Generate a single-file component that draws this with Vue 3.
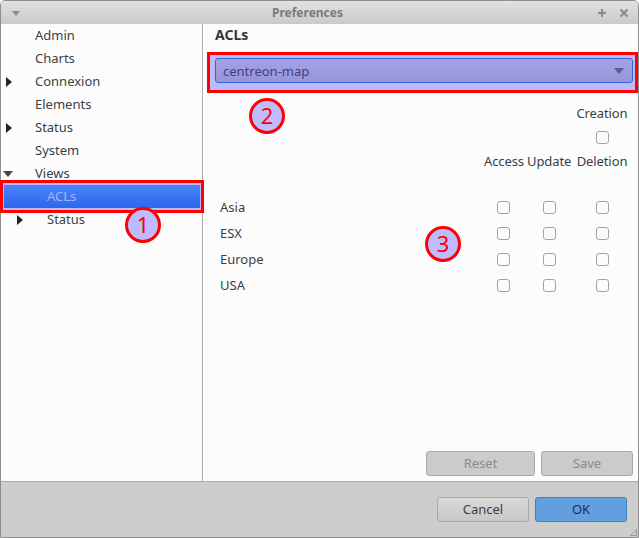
<template>
  <div class="window">
    <header class="titlebar">
      <svg class="menu-arrow" width="10" height="6" viewBox="0 0 10 6"><path d="M1 0h8L5 5z" fill="#8c8c8c" /></svg>
      <span class="title">Preferences</span>
      <span class="win-btn plus">
        <svg width="10" height="10" viewBox="0 0 10 10"><path d="M4 1h2v3h3v2H6v3H4V6H1V4h3z" fill="#8a8a8a" /></svg>
      </span>
      <span class="win-btn close">
        <svg width="10" height="10" viewBox="0 0 10 10"><path d="M1.5 1.5l7 7M8.5 1.5l-7 7" stroke="#8a8a8a" stroke-width="2" /></svg>
      </span>
    </header>

    <div class="main">
      <aside class="tree">
        <div
          v-for="item in tree"
          :key="item.label + item.depth"
          class="tree-row"
          :class="{ selected: item.selected, child: item.depth === 1 }"
        >
          <svg v-if="item.arrow === 'right'" class="arrow" width="6" height="10" viewBox="0 0 6 10"><path d="M0 0l6 5-6 5z" fill="#222" /></svg>
          <svg v-if="item.arrow === 'down'" class="arrow down" width="10" height="6" viewBox="0 0 10 6"><path d="M0 0h10L5 6z" fill="#444" /></svg>
          <span class="tree-label">{{ item.label }}</span>
        </div>
      </aside>

      <section class="panel">
        <h2>ACLs</h2>
        <div class="combo">
          <span>centreon-map</span>
          <svg width="10" height="6" viewBox="0 0 10 6"><path d="M0 0h10L5 6z" fill="#6b6b67" /></svg>
        </div>

        <div class="perms">
          <span class="head c4">Creation</span>
          <span class="c4 cell"><i class="check"></i></span>
          <span class="head c2">Access</span>
          <span class="head c3">Update</span>
          <span class="head c4">Deletion</span>
        </div>

        <div class="perms rows">
          <template v-for="name in groups" :key="name">
            <span class="group">{{ name }}</span>
            <span class="cell"><i class="check"></i></span>
            <span class="cell"><i class="check"></i></span>
            <span class="cell"><i class="check"></i></span>
          </template>
        </div>

        <div class="panel-actions">
          <button class="btn disabled reset">Reset</button>
          <button class="btn disabled save">Save</button>
        </div>
      </section>
    </div>

    <footer class="footer">
      <button class="btn cancel">Cancel</button>
      <button class="btn ok">OK</button>
      <svg class="grip" width="7" height="7" viewBox="0 0 7 7"><path d="M6.5 0.5v6h-6zM6.5 3.5v3h-3" fill="none" stroke="#999" stroke-width="1" /></svg>
    </footer>

    <div class="mark box-tree"></div>
    <div class="mark box-combo"></div>
    <div class="badge" style="left: 124px; top: 206px">1</div>
    <div class="badge" style="left: 248px; top: 97px">2</div>
    <div class="badge" style="left: 424px; top: 225px">3</div>
  </div>
</template>

<script setup>
const tree = [
  { label: 'Admin', depth: 0 },
  { label: 'Charts', depth: 0 },
  { label: 'Connexion', depth: 0, arrow: 'right' },
  { label: 'Elements', depth: 0 },
  { label: 'Status', depth: 0, arrow: 'right' },
  { label: 'System', depth: 0 },
  { label: 'Views', depth: 0, arrow: 'down' },
  { label: 'ACLs', depth: 1, selected: true },
  { label: 'Status', depth: 1, arrow: 'right' }
]

const groups = ['Asia', 'ESX', 'Europe', 'USA']
</script>

<style>
html, body { margin: 0; background: #fff; }
</style>

<style scoped>
.window {
  position: relative;
  width: 639px;
  height: 538px;
  box-sizing: border-box;
  border: 1px solid #8e8e8e;
  border-radius: 5px 5px 0 0;
  display: flex;
  flex-direction: column;
  font-family: "Noto Sans", sans-serif;
  font-size: 13px;
  color: #3a3f45;
  background: #fcfcfc;
}

.titlebar {
  height: 23px;
  flex: none;
  position: relative;
  display: flex;
  align-items: center;
  justify-content: center;
  padding-right: 24px;
  border-radius: 4px 4px 0 0;
  background: linear-gradient(#e2e2e2, #c9c9c9);
}
.title { font-size: 12px; font-weight: 700; color: #7a7a7a; }
.menu-arrow { position: absolute; left: 10px; top: 10px; }
.win-btn { position: absolute; top: 7px; line-height: 0; }
.plus { right: 31px; }
.close { right: 9px; }

.main { flex: 1; display: flex; min-height: 0; }

.tree { width: 201px; flex: none; border-right: 1px solid #b0b0b0; }
.tree-row {
  position: relative;
  height: 23px;
  display: flex;
  align-items: center;
  padding: 0 0 1px 34px;
  box-sizing: border-box;
}
.tree-row.child { padding-left: 46px; }
.tree-row .arrow { position: absolute; left: 5px; top: 7px; }
.tree-row .arrow.down { left: 2px; top: 9px; }
.tree-row.child .arrow { left: 16px; }
.tree-row.selected {
  background: linear-gradient(#53a8f8, #207ee1);
  color: #dcf0f0;
  margin: 0 2px 0 3px;
  padding-left: 43px;
}

.panel { flex: 1; display: flex; flex-direction: column; min-width: 0; }
.panel h2 {
  margin: 0;
  height: 28px;
  line-height: 21px;
  padding-left: 12px;
  font-size: 14px;
  font-weight: 700;
  color: #33373b;
}
.combo {
  margin: 6px 5px 0 12px;
  height: 25px;
  box-sizing: border-box;
  border: 1px solid #2f79c3;
  border-radius: 3px;
  background: linear-gradient(#dbd7d6, #c7c4c3);
  color: #3a3f45;
  display: flex;
  align-items: center;
  justify-content: space-between;
  padding: 0 8px 0 7px;
}

.perms {
  display: grid;
  grid-template-columns: 1fr 38px 44px 52px;
  column-gap: 5px;
  grid-auto-rows: 24px;
  align-items: center;
  margin: 18px 10px 0 17px;
}
.perms.rows { grid-auto-rows: 26px; margin-top: 21px; flex: 1; align-content: start; }
.head { text-align: center; white-space: nowrap; letter-spacing: -0.1px; }
.c2 { grid-column: 2; }
.c3 { grid-column: 3; }
.c4 { grid-column: 4; }
.cell { display: flex; justify-content: center; }
.check {
  width: 13px;
  height: 13px;
  box-sizing: border-box;
  border: 1px solid #a3a3a3;
  border-radius: 3px;
  background: #fcfcfc;
}

.panel-actions {
  display: flex;
  justify-content: flex-end;
  gap: 6px;
  padding: 0 5px 5px 0;
}

.btn {
  height: 25px;
  box-sizing: border-box;
  border: 1px solid #a8a8a8;
  border-radius: 3px;
  font-family: inherit;
  font-size: 13px;
  padding: 0 0 2px;
  color: #3a3f45;
  background: linear-gradient(#d9d9d9, #c8c8c8);
}
.btn.disabled { color: #8a8a8a; background: #cbcbcb; }
.reset { width: 109px; }
.save { width: 92px; }
.cancel { width: 92px; }
.ok { width: 92px; background: #629fe0; border-color: #3f7cc0; color: #20303f; }

.footer {
  height: 56px;
  flex: none;
  box-sizing: border-box;
  border-top: 1px solid #aaa;
  background: #cdcdcd;
  display: flex;
  justify-content: flex-end;
  gap: 6px;
  padding: 15px 11px 0 0;
  position: relative;
}
.grip { position: absolute; right: 1px; bottom: 1px; }

.mark {
  position: absolute;
  box-sizing: border-box;
  border: 3px solid #f00;
  background: rgba(64, 64, 255, 0.35);
  pointer-events: none;
}
.box-tree { left: -1px; top: 179px; width: 204px; height: 33px; }
.box-combo { left: 206px; top: 51px; width: 431px; height: 41px; }

.badge {
  position: absolute;
  width: 36px;
  height: 36px;
  box-sizing: border-box;
  border: 3px solid #f00;
  border-radius: 50%;
  background: #bcbcff;
  color: #f00;
  font-size: 22px;
  line-height: 29px;
  text-align: center;
}
</style>
